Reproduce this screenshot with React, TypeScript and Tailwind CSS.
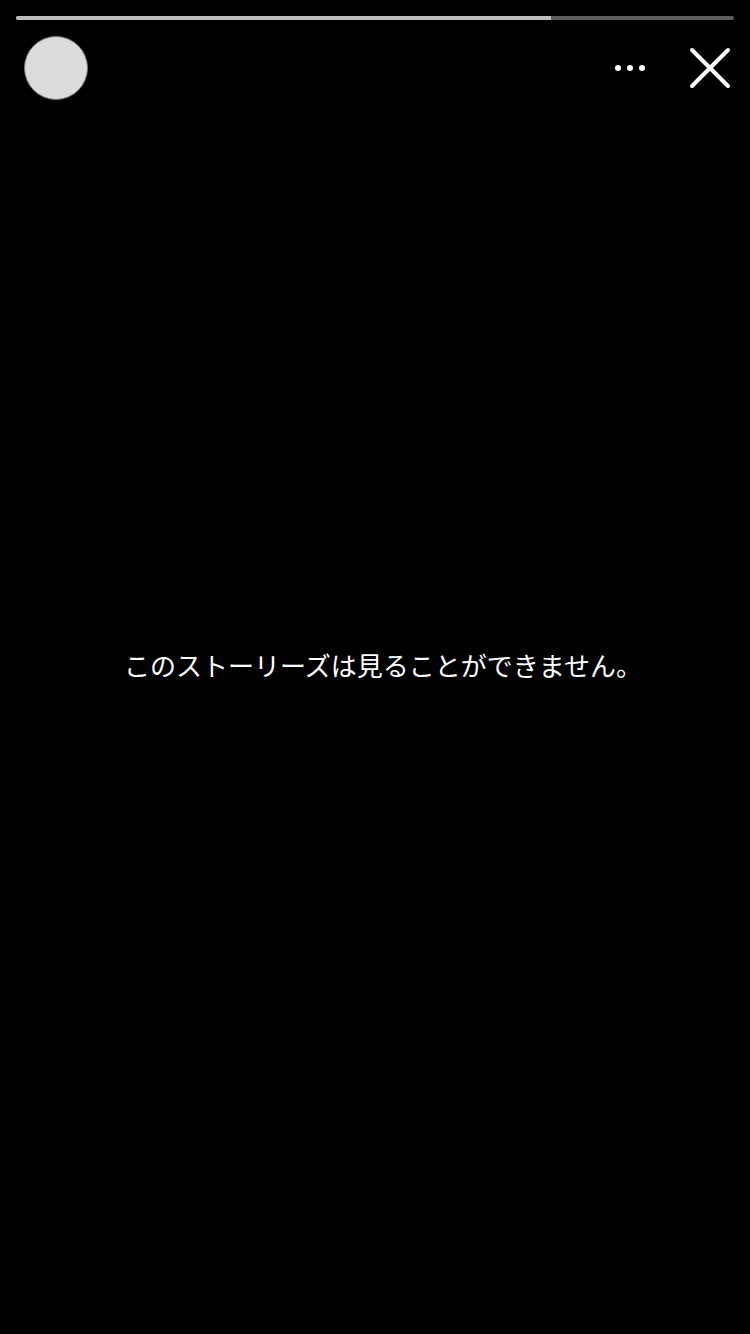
const story = {
  message: 'このストーリーズは見ることができません。',
  elapsed: 535,
  duration: 718
}

function ProgressBar({ value, max }: { value: number; max: number }) {
  return (
    <div
      role="progressbar"
      aria-valuenow={value}
      aria-valuemax={max}
      className="h-1 overflow-hidden rounded-full bg-[#5e5e5e]"
    >
      <div
        className="h-full bg-[#bebebe]"
        style={{ width: `${(value / max) * 100}%` }}
      />
    </div>
  )
}

function MoreIcon() {
  return (
    <svg viewBox="0 0 32 32" className="size-8" fill="currentColor" aria-hidden="true">
      <circle cx="4" cy="16" r="3" />
      <circle cx="16" cy="16" r="3" />
      <circle cx="28" cy="16" r="3" />
    </svg>
  )
}

function CloseIcon() {
  return (
    <svg viewBox="0 0 48 48" className="size-12" fill="none" stroke="currentColor" aria-hidden="true">
      <path d="M6 6l36 36M42 6L6 42" strokeWidth="4" strokeLinecap="round" />
    </svg>
  )
}

export default function App() {
  return (
    <div className="flex min-h-screen flex-col bg-black font-['Noto_Sans_CJK_JP',sans-serif] text-white">
      <header className="px-4 pt-4">
        <ProgressBar value={story.elapsed} max={story.duration} />
        <div className="mt-4 flex h-16 items-center pl-2">
          <div className="size-16 rounded-full border border-[#777] bg-[#dbdbdb]" />
          <div className="ml-auto flex items-center gap-10">
            <button type="button" aria-label="その他">
              <MoreIcon />
            </button>
            <button type="button" aria-label="閉じる">
              <CloseIcon />
            </button>
          </div>
        </div>
      </header>

      <main className="flex flex-1 items-center justify-center pb-26 pl-4">
        <p className="text-[26px] leading-10">{story.message}</p>
      </main>
    </div>
  )
}
